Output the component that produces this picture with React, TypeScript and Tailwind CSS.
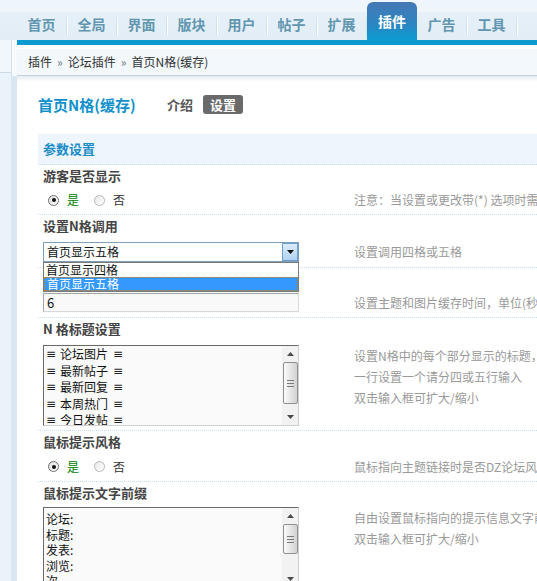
import React from "react";

const tabs = ["首页", "全局", "界面", "版块", "用户", "帖子", "扩展", "插件", "广告", "工具"];

function Radio({ checked }: { checked?: boolean }) {
  return (
    <span
      className={
        checked
          ? "w-[11px] h-[11px] shrink-0 rounded-full border border-[#6f6f6f] bg-[linear-gradient(135deg,#dcdcdc,#ffffff)] flex items-center justify-center"
          : "w-[11px] h-[11px] shrink-0 rounded-full border border-[#b8b8b8] bg-[linear-gradient(135deg,#e6e6e6,#ffffff)] flex items-center justify-center"
      }
    >
      {checked && <span className="w-[4px] h-[4px] rounded-full bg-[#111]" />}
    </span>
  );
}

function Scrollbar({ thumb }: { thumb: string }) {
  return (
    <div className="w-[16px] h-full shrink-0 bg-[#f2f2f2] flex flex-col items-center">
      <div className="h-[16px] w-full flex items-center justify-center shrink-0">
        <svg width="7" height="4" viewBox="0 0 7 4">
          <path d="M0 4 L3.5 0 L7 4 Z" fill="#4a4a4a" />
        </svg>
      </div>
      <div className={thumb}>
        <span className="w-[7px] h-[1px] bg-[#7a7a7a]" />
        <span className="w-[7px] h-[1px] bg-[#7a7a7a]" />
        <span className="w-[7px] h-[1px] bg-[#7a7a7a]" />
      </div>
      <div className="flex-1" />
      <div className="h-[16px] w-full flex items-center justify-center shrink-0">
        <svg width="7" height="4" viewBox="0 0 7 4">
          <path d="M0 0 L3.5 4 L7 0 Z" fill="#4a4a4a" />
        </svg>
      </div>
    </div>
  );
}

function Eq() {
  return <span className="font-['DejaVu_Sans',sans-serif] text-[12px] leading-[16px] text-[#222]">≡</span>;
}

const labelCls =
  "h-[21px] flex items-center pl-[5px] font-bold text-[13px] text-[#444] leading-[21px]";
const tipCls = "text-[12px] text-[#999] leading-[20px]";

export default function App() {
  return (
    <div className="w-[537px] h-[581px] overflow-hidden bg-[#eef5fb] font-['Noto_Sans_CJK_SC','Noto_Sans',sans-serif] text-[12px] text-[#333]">
      {/* top nav */}
      <div className="h-[40px] flex items-end pl-[17px] bg-[linear-gradient(to_bottom,#eef5fb_0px,#eef5fb_12px,#e6f0f8_12px,#e2edf6_40px)]">
        {tabs.map((t) =>
          t === "插件" ? (
            <div
              key={t}
              className="w-[50px] h-[38px] shrink-0 rounded-t-[6px] bg-[linear-gradient(to_bottom,#4479b4,#2a86c2_60%,#0b9dd2)] flex items-center justify-center text-white font-bold text-[14px] leading-[20px]"
            >
              {t}
            </div>
          ) : (
            <div key={t} className="w-[50px] h-[28px] shrink-0 flex items-center">
              <span className="flex-1 text-center pb-[4px] text-[14px] font-bold text-[#6196b0] leading-[20px]">
                {t}
              </span>
              <span className="w-[1px] h-[18px] bg-[#d2e0ea] shadow-[1px_0_0_#ffffff]" />
            </div>
          )
        )}
      </div>

      {/* body */}
      <div className="flex h-[541px]">
        <div className="w-[11px] shrink-0 flex flex-col">
          <div className="h-[33px] bg-[#f2f7fb] border-b border-[#cdd9e2]" />
          <div className="flex-1 bg-[#eaf3fa]" />
        </div>
        <div className="w-[6px] shrink-0 flex flex-col">
          <div className="h-[36px] bg-[#f6fafd] border-l border-[#d4e1ea]" />
          <div className="flex-1 bg-[#d9e7f2]" />
        </div>
        <div className="flex-1 min-w-0 bg-white overflow-hidden">
          <div className="h-[5px] bg-[#0b9bd1]" />
          <div className="h-[4px] bg-white" />
          <div className="h-[27px] bg-[#f2f8fc] border-b border-[#c2d1db] flex items-center pl-[11px] whitespace-nowrap text-[12px] text-[#333] leading-[20px]">
            <span>插件</span>
            <span className="mx-[5px] text-[12px] text-[#7a7a7a]">»</span>
            <span>论坛插件</span>
            <span className="mx-[5px] text-[12px] text-[#7a7a7a]">»</span>
            <span>首页N格(缓存)</span>
          </div>
          <div className="h-[6px] bg-[linear-gradient(to_bottom,#e5edf3,#ffffff)]" />

          <div className="pl-[21px] pt-[13px]">
            {/* title row */}
            <div className="h-[19px] flex items-center whitespace-nowrap">
              <span className="w-[129px] shrink-0 font-bold text-[15px] text-[#1190cc] leading-[19px]">
                首页N格(缓存)
              </span>
              <span className="font-bold text-[13px] text-[#555] leading-[19px]">介绍</span>
              <span className="ml-[10px] h-[19px] w-[40px] rounded-[3px] bg-[#6a6a6a] text-white font-bold text-[13px] leading-[19px] flex items-center justify-center">
                设置
              </span>
            </div>

            {/* table */}
            <div className="mt-[20px] whitespace-nowrap">
              <div className="h-[31px] bg-[#eef5fc] border-b border-dotted border-[#c3dff0] flex items-center pl-[5px] font-bold text-[13px] text-[#1a8cc8]">
                参数设置
              </div>

              {/* 游客是否显示 */}
              <div className={labelCls}>游客是否显示</div>
              <div className="h-[29px] border-b border-dotted border-[#c3dff0] flex items-center">
                <div className="w-[316px] shrink-0 pl-[10px] flex items-center">
                  <Radio checked />
                  <span className="ml-[8px] text-[#008000] text-[12px] leading-[16px]">是</span>
                  <span className="ml-[15px]">
                    <Radio />
                  </span>
                  <span className="ml-[8px] text-[#333] text-[12px] leading-[16px]">否</span>
                </div>
                <div className={tipCls}>注意：当设置或更改带(*) 选项时需要更新缓存</div>
              </div>

              {/* 设置N格调用 */}
              <div className={labelCls}>设置N格调用</div>
              <div className="h-[32px] border-b border-dotted border-[#c3dff0] flex items-start pt-[6px]">
                <div className="w-[316px] shrink-0 pl-[5px]">
                  <div className="relative w-[256px] h-[20px] border border-[#7d9fbe] bg-white flex">
                    <span className="flex-1 pl-[3px] text-[12px] leading-[18px] text-[#111]">首页显示五格</span>
                    <span className="w-[16px] h-[18px] border border-[#6f9dcc] bg-[linear-gradient(to_bottom,#dcedfb,#b0d2f1)] flex items-center justify-center">
                      <svg width="7" height="4" viewBox="0 0 7 4">
                        <path d="M0 0 L3.5 4 L7 0 Z" fill="#111" />
                      </svg>
                    </span>
                    {/* open dropdown list */}
                    <div className="absolute left-[-1px] top-[19px] w-[256px] h-[30px] z-10 border border-[#7a7a7a] bg-white flex flex-col">
                      <div className="h-[14px] pl-[2px] text-[12px] leading-[14px] text-[#111]">首页显示四格</div>
                      <div className="h-[14px] pl-[2px] text-[12px] leading-[12px] text-white bg-[#3399ff] border border-dotted border-[#e07b00]">
                        首页显示五格
                      </div>
                    </div>
                  </div>
                </div>
                <div className={tipCls}>设置调用四格或五格</div>
              </div>

              {/* row whose label is hidden by the open dropdown */}
              <div className="h-[21px]" />
              <div className="h-[29px] border-b border-dotted border-[#c3dff0] flex items-start pt-[4px]">
                <div className="w-[316px] shrink-0 pl-[5px]">
                  <div className="w-[256px] h-[19px] border border-[#a5a5a5] border-r-[#d8d8d8] border-b-[#d8d8d8] bg-[#f9f9f9] pl-[3px] text-[13px] leading-[17px] text-[#111]">
                    6
                  </div>
                </div>
                <div className={tipCls}>设置主题和图片缓存时间，单位(秒)</div>
              </div>

              {/* N 格标题设置 */}
              <div className={labelCls}>N 格标题设置</div>
              <div className="h-[92px] border-b border-dotted border-[#c3dff0] flex items-start pt-[6px]">
                <div className="w-[316px] shrink-0 pl-[5px]">
                  <div className="w-[256px] h-[81px] border border-[#6a6a6a] border-r-[#cfcfcf] border-b-[#cfcfcf] bg-[#fafafa] flex">
                    <div className="flex-1 overflow-hidden pl-[2px] text-[12px] leading-[16.5px] text-[#111]">
                      {["论坛图片", "最新帖子", "最新回复", "本周热门", "今日发帖"].map((s) => (
                        <div key={s} className="flex items-center h-[16.5px]">
                          <Eq />
                          <span className="ml-[4px]">{s}</span>
                          <span className="ml-[5px] flex">
                            <Eq />
                          </span>
                        </div>
                      ))}
                    </div>
                    <Scrollbar thumb="w-[15px] h-[42px] shrink-0 border border-[#8f8f8f] rounded-[2px] bg-[linear-gradient(to_right,#fafafa,#d2d2d2)] flex flex-col items-center justify-center gap-[2px]" />
                  </div>
                </div>
                <div className="text-[12px] text-[#999] leading-[21px]">
                  <div>设置N格中的每个部分显示的标题，如论坛图片</div>
                  <div>一行设置一个请分四或五行输入</div>
                  <div>双击输入框可扩大/缩小</div>
                </div>
              </div>

              {/* 鼠标提示风格 */}
              <div className={labelCls}>鼠标提示风格</div>
              <div className="h-[30px] border-b border-dotted border-[#c3dff0] flex items-center">
                <div className="w-[316px] shrink-0 pl-[10px] flex items-center">
                  <Radio checked />
                  <span className="ml-[8px] text-[#008000] text-[12px] leading-[16px]">是</span>
                  <span className="ml-[15px]">
                    <Radio />
                  </span>
                  <span className="ml-[8px] text-[#333] text-[12px] leading-[16px]">否</span>
                </div>
                <div className={tipCls}>鼠标指向主题链接时是否DZ论坛风格显示</div>
              </div>

              {/* 鼠标提示文字前缀 */}
              <div className={labelCls}>鼠标提示文字前缀</div>
              <div className="h-[100px] flex items-start pt-[4px]">
                <div className="w-[316px] shrink-0 pl-[5px]">
                  <div className="w-[256px] h-[81px] border border-[#6a6a6a] border-r-[#cfcfcf] border-b-[#cfcfcf] bg-[#fafafa] flex">
                    <div className="flex-1 overflow-hidden pl-[2px] pt-[3px] text-[12px] leading-[15.5px] text-[#111]">
                      <div>论坛:</div>
                      <div>标题:</div>
                      <div>发表:</div>
                      <div>浏览:</div>
                      <div>次</div>
                    </div>
                    <Scrollbar thumb="w-[15px] h-[30px] shrink-0 border border-[#8f8f8f] rounded-[2px] bg-[linear-gradient(to_right,#fafafa,#d2d2d2)] flex flex-col items-center justify-center gap-[2px]" />
                  </div>
                </div>
                <div className="text-[12px] text-[#999] leading-[21px]">
                  <div>自由设置鼠标指向的提示信息文字前缀</div>
                  <div>双击输入框可扩大/缩小</div>
                </div>
              </div>
            </div>
          </div>
        </div>
      </div>
    </div>
  );
}
